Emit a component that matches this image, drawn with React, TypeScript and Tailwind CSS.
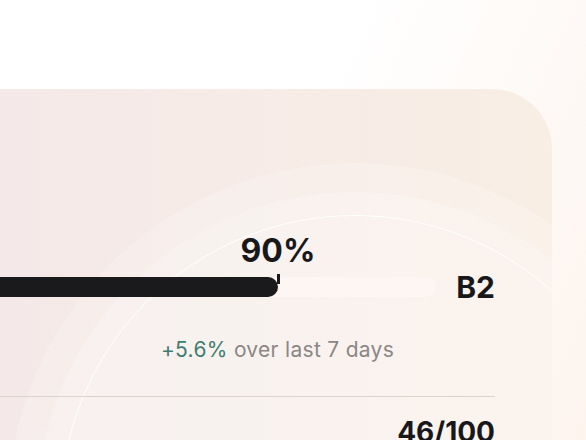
import React from "react";

const fill = 278;

export default function App() {
  return (
    <div
      className="w-[586px] h-[440px] overflow-hidden bg-[linear-gradient(115deg,#ffffff_45%,#fdf4ee)] pt-[89px] text-[#18181b]"
      style={{ fontFamily: "Inter, 'Noto Sans', sans-serif" }}
    >
      <div className="relative flex h-[420px] w-[552px] flex-col overflow-hidden rounded-tr-[60px] bg-[linear-gradient(90deg,#f4e9e8,#f9eee4)] pr-[57px] pt-[146px]">
        {/* soft rings behind the meter */}
        <div className="pointer-events-none absolute left-[8px] top-[74px] h-[694px] w-[694px] rounded-full bg-white/20" />
        <div className="pointer-events-none absolute left-[37px] top-[103px] h-[636px] w-[636px] rounded-full bg-white/20" />
        <div className="pointer-events-none absolute left-[60px] top-[126px] h-[590px] w-[590px] rounded-full border border-white" />

        <div className="relative flex justify-end" style={{ width: fill }}>
          <span className="translate-x-1/2 text-[32px] font-bold leading-none">90%</span>
        </div>

        <div className="relative mt-[5px] flex items-center gap-5">
          <div className="flex h-5 flex-1 rounded-r-full bg-[#fdf6f2]">
            <div className="relative h-5 rounded-r-full bg-[#1a1a1c]" style={{ width: fill }}>
              <div className="absolute right-[-2px] top-[-3px] h-[10px] w-[3px] bg-[#1a1a1c]" />
            </div>
          </div>
          <div className="text-[30px] font-bold leading-none">B2</div>
        </div>

        <p className="relative mt-[37px] pl-[60px] text-center text-[21px] leading-none tracking-[0.3px]">
          <span className="text-[#3f7c70]">+5.6%</span>{" "}
          <span className="text-[#8a8785]">over last 7 days</span>
        </p>

        <div className="relative mt-[36px] border-t border-[#ddd3ce]" />

        <div className="relative mt-[21px] text-right text-[28px] font-bold leading-none">46/100</div>
      </div>
    </div>
  );
}
